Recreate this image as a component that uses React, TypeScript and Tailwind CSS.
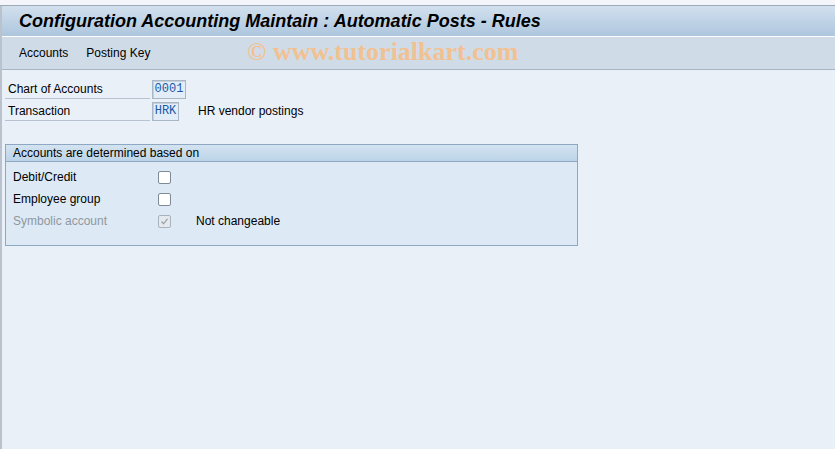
import type { ReactNode } from "react";

const font = { fontFamily: "'Liberation Sans', Arial, sans-serif" };

function FieldRow({ label, value, width, desc }: { label: string; value: string; width: string; desc?: string }) {
  return (
    <div className="flex items-center h-[22px]">
      <div className="w-[145px] h-[20px] border-b border-[#b7c3d0] pl-[3px] flex items-center text-[12px] text-black">
        {label}
      </div>
      <div
        className={`ml-[2px] h-[19px] ${width} border border-[#a9b6c4] bg-[#e3edf7] flex items-center justify-center text-[12px] text-[#1859a8] shadow-[inset_1px_1px_0_#c4d0dc]`}
        style={{ fontFamily: "'Liberation Mono', 'DejaVu Sans Mono', monospace" }}
      >
        {value}
      </div>
      {desc && <div className="ml-[19px] text-[12px] text-black">{desc}</div>}
    </div>
  );
}

function Check({ checked, disabled }: { checked?: boolean; disabled?: boolean }) {
  return (
    <div
      className={`w-[13px] h-[13px] border rounded-[2px] flex items-center justify-center ${
        disabled ? "border-[#a9b3bd] bg-[#e4e9ee]" : "border-[#7f8b97] bg-white"
      }`}
    >
      {checked && (
        <svg width="9" height="9" viewBox="0 0 9 9">
          <path d="M1.5 4.5 L3.5 6.8 L7.5 1.8" fill="none" stroke="#9aa4ad" strokeWidth="1.3" />
        </svg>
      )}
    </div>
  );
}

function CheckRow({ label, children, grey, extra }: { label: string; children: ReactNode; grey?: boolean; extra?: string }) {
  return (
    <div className="flex items-center h-[22px]">
      <div className={`w-[152px] pl-[7px] text-[12px] ${grey ? "text-[#8f989f]" : "text-black"}`}>{label}</div>
      {children}
      {extra && <div className="ml-[25px] text-[12px] text-black">{extra}</div>}
    </div>
  );
}

export default function App() {
  return (
    <div className="w-[835px] h-[449px] bg-[#e9f0f8] flex flex-col overflow-hidden" style={font}>
      <div className="h-[6px] bg-[#f3f5fa] border-b border-[#9ea8b6] shrink-0" />
      <div className="flex-1 flex flex-col border-l-2 border-[#b9c2cd]">
        <div className="h-[31px] bg-gradient-to-b from-[#d2e0ee] to-[#adc6dd] flex items-center pl-[17px] border-b border-white shrink-0">
          <span className="text-[18px] font-bold italic text-black">
            Configuration Accounting Maintain : Automatic Posts - Rules
          </span>
        </div>
        <div className="h-[33px] bg-[#cfdce8] border-b border-[#a8b4c3] flex items-center pl-[17px] text-[12px] text-black shrink-0 relative">
          <span>Accounts</span>
          <span className="ml-[18px]">Posting Key</span>
          <span
            className="absolute left-[245px] top-0 leading-[30px] text-[26px] font-bold text-[#f2c191]"
            style={{ fontFamily: "'Liberation Serif', 'DejaVu Serif', serif" }}
          >
            © www.tutorialkart.com
          </span>
        </div>
        <div className="pl-[3px] pt-[8px] flex flex-col">
          <FieldRow label="Chart of Accounts" value="0001" width="w-[34px]" />
          <FieldRow label="Transaction" value="HRK" width="w-[27px]" desc="HR vendor postings" />
          <div className="mt-[22px] w-[573px] h-[102px] border border-[#8ea8c4] bg-[#dde9f4] flex flex-col">
            <div className="h-[17px] bg-gradient-to-b from-[#d4e3f1] to-[#bcd4e8] border-b border-[#8ea8c4] pl-[7px] flex items-center text-[12px] text-black">
              Accounts are determined based on
            </div>
            <div className="pt-[4px] flex flex-col">
              <CheckRow label="Debit/Credit">
                <Check />
              </CheckRow>
              <CheckRow label="Employee group">
                <Check />
              </CheckRow>
              <CheckRow label="Symbolic account" grey extra="Not changeable">
                <Check checked disabled />
              </CheckRow>
            </div>
          </div>
        </div>
      </div>
    </div>
  );
}
